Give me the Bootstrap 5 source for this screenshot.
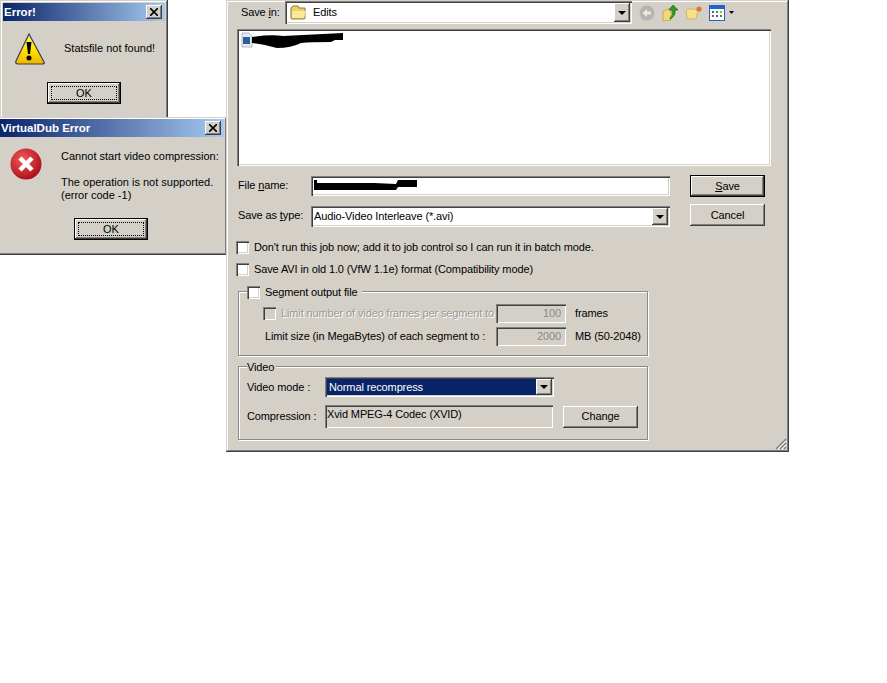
<!DOCTYPE html>
<html lang="en">
<head>
    <meta charset="UTF-8">
    <meta name="viewport" content="width=device-width, initial-scale=1.0">
    <title>VirtualDub Error</title>
    <link href="https://cdn.jsdelivr.net/npm/bootstrap@5.3.0/dist/css/bootstrap.min.css" rel="stylesheet">
    <style>
        body { background: #fff; overflow: hidden; font: 11px/13px "Liberation Sans", sans-serif; color: #000; }
        span, p, label { white-space: nowrap; }
        u { text-underline-offset: 1px; }
        /* windows sit on a free desktop, these are the only absolute boxes */
        .win { position: absolute; background: #d4d0c8; box-shadow: inset -1px -1px 0 #404040, inset 1px 1px 0 #d4d0c8, inset -2px -2px 0 #808080, inset 2px 2px 0 #fff; }
        .win-one { left: 0; top: 0; width: 168px; height: 122px; padding: 3px; }
        .win-two { left: -3px; top: 117px; width: 230px; height: 138px; padding: 2px 3px; }
        .win-save { left: 226px; top: 0; width: 563px; height: 452px; letter-spacing: -.12px; }
        .title-bar { height: 18px; padding: 0 3px 0 1px; background: linear-gradient(90deg, #0a246a, #a6caf0); color: #fff; font: bold 11.5px/18px "Liberation Sans", sans-serif; }
        .close-btn { width: 16px; height: 14px; background: #d4d0c8; box-shadow: inset -1px -1px 0 #404040, inset 1px 1px 0 #fff, inset -2px -2px 0 #808080; }
        .close-btn svg { display: block; margin: 3px 0 0 4px; }
        .msg-one { height: 43px; padding-left: 12px; margin-top: 6px; }
        .msg-one p { margin: 0 0 0 19px; }
        .msg-two { height: 81px; padding: 11px 0 0 10px; }
        .msg-two p { margin: 2px 0 0 19px; line-height: 13px; }
        .ok-btn { width: 74px; height: 22px; background: #d4d0c8; border: 1px solid #000; box-shadow: inset -1px -1px 0 #404040, inset 1px 1px 0 #fff, inset -2px -2px 0 #808080; position: relative; }
        .ok-btn::after { content: ""; position: absolute; inset: 3px; border: 1px dotted #000; }
        .ok-one { margin: 12px 0 0 44px; }
        .ok-two { margin: 0 0 0 74px; }
        .top-row { height: 23px; margin-top: 1px; padding-left: 15px; }
        .top-row label { width: 44px; }
        .sunken { background: #fff; box-shadow: inset 1px 1px 0 #808080, inset 2px 2px 0 #404040, inset -1px -1px 0 #fff, inset -2px -2px 0 #d4d0c8; }
        .combo-top { width: 347px; height: 23px; padding-left: 5px; gap: 5px; }
        .arrow-btn { width: 16px; background: #d4d0c8; box-shadow: inset -1px -1px 0 #404040, inset 1px 1px 0 #fff, inset -2px -2px 0 #808080; }
        .arrow-btn::after { content: ""; border: 4px solid transparent; border-top-color: #000; border-bottom-width: 0; }
        .combo-top .arrow-btn { height: 19px; margin: 0 2px 0 auto; }
        .tool-icons { margin-left: 7px; gap: 6px; }
        .file-list { margin: 5px 0 0 11px; width: 534px; height: 137px; padding: 3px 4px; }
        .name-row { margin: 9px 0 0 12px; height: 22px; }
        .type-row { margin: 7px 0 0 12px; height: 23px; }
        .name-row label, .type-row label { width: 73px; }
        .name-row label { margin-top: 4px; }
        .type-row label { margin-top: 5px; }
        .name-field { width: 359px; height: 20px; margin-top: 1px; padding: 3px; }
        .type-field { width: 359px; height: 21px; margin-top: 2px; padding: 0 2px 0 3px; }
        .type-field .arrow-btn { height: 17px; margin-left: auto; }
        .push-btn { width: 75px; height: 22px; margin-left: 20px; background: #d4d0c8; box-shadow: inset -1px -1px 0 #404040, inset 1px 1px 0 #fff, inset -2px -2px 0 #808080; }
        .push-default { border: 1px solid #000; }
        .check-row { margin-left: 10px; height: 13px; gap: 5px; }
        .check-one { margin-top: 14px; }
        .check-two { margin-top: 9px; }
        .tick { width: 13px; height: 13px; flex: none; box-shadow: inset 1px 1px 0 #808080, inset 2px 2px 0 #404040, inset -1px -1px 0 #fff, inset -2px -2px 0 #d4d0c8; background: #fff; }
        .tick-off { background: #d4d0c8; }
        .group-box { position: relative; margin: 0 0 0 12px; width: 410px; border: 1px solid #8c8a84; box-shadow: 1px 1px 0 #fff, inset 1px 1px 0 #fff; }
        .group-seg { margin-top: 15px; height: 65px; padding: 12px 0 0 24px; }
        .group-vid { margin-top: 10px; height: 74px; padding: 10px 0 0 8px; }
        .legend-box { position: absolute; left: 8px; top: -6px; background: #d4d0c8; padding-right: 4px; gap: 5px; height: 13px; }
        .legend-text { position: absolute; left: 8px; top: -6px; background: #d4d0c8; padding-right: 2px; }
        .seg-row { height: 19px; }
        .seg-row + .seg-row { margin-top: 4px; }
        .seg-label { width: 233px; padding-left: 2px; }
        .seg-label.dim { color: #9a9a94; text-shadow: 1px 1px 0 #fff; margin-left: 5px; padding-left: 0; width: 215px; }
        .seg-num { width: 70px; height: 19px; margin-right: 9px; padding-right: 5px; text-align: right; color: #8a8a84; line-height: 19px; background: #d4d0c8; box-shadow: inset 1px 1px 0 #808080, inset 2px 2px 0 #404040, inset -1px -1px 0 #fff; }
        .vid-label { width: 78px; }
        .vid-combo { width: 229px; height: 20px; padding: 2px; }
        .vid-pick { flex: 1; background: #0a246a; color: #fff; padding-left: 2px; line-height: 16px; }
        .vid-row-two { margin-top: 8px; }
        .comp-field { width: 228px; height: 23px; padding: 3px 2px; background: #d4d0c8; box-shadow: inset 1px 1px 0 #808080, inset 2px 2px 0 #404040, inset -1px -1px 0 #fff; }
        .change-btn { margin-left: 10px; }
        .grip { position: absolute; right: 2px; bottom: 2px; }
    </style>
</head>
<body>

    <!-- first message box -->
    <div class="win win-one">
        <div class="title-bar d-flex align-items-center justify-content-between">
            <span>Error!</span>
            <div class="close-btn"><svg width="8" height="8" viewBox="0 0 8 8"><path d="M0 0L8 8M8 0L0 8" stroke="#000" stroke-width="1.6"/></svg></div>
        </div>
        <div class="msg-one d-flex align-items-center">
            <svg width="30" height="32" viewBox="0 0 30 32" class="flex-shrink-0"><defs><linearGradient id="yellowTri" x1="0" y1="0" x2="0" y2="1"><stop offset="0" stop-color="#fff27a"/><stop offset=".5" stop-color="#ffe600"/><stop offset="1" stop-color="#f0b400"/></linearGradient></defs><path d="M14 1L29 29Q30 31 27 31H3Q0 31 1 28Z" fill="url(#yellowTri)" stroke="#3a3a50" stroke-width="1.2"/><path d="M11.500 9h5l-1.500 12h-2z" fill="#000"/><circle cx="14" cy="25" r="2.500" fill="#000"/></svg>
            <p>Statsfile not found!</p>
        </div>
        <div class="ok-btn ok-one d-flex align-items-center justify-content-center">OK</div>
    </div>

    <!-- VirtualDub message box -->
    <div class="win win-two">
        <div class="title-bar d-flex align-items-center justify-content-between">
            <span>VirtualDub Error</span>
            <div class="close-btn"><svg width="8" height="8" viewBox="0 0 8 8"><path d="M0 0L8 8M8 0L0 8" stroke="#000" stroke-width="1.6"/></svg></div>
        </div>
        <div class="msg-two d-flex">
            <svg width="32" height="32" viewBox="0 0 32 32" class="flex-shrink-0"><defs><radialGradient id="redBall" cx=".4" cy=".35" r=".7"><stop offset="0" stop-color="#f25a5a"/><stop offset="1" stop-color="#a80d14"/></radialGradient></defs><circle cx="16" cy="16" r="15.500" fill="url(#redBall)"/><path d="M10 10L22 22M22 10L10 22" stroke="#fff" stroke-width="4.500"/></svg>
            <p>Cannot start video compression:<br><br>The operation is not supported.<br>(error code -1)</p>
        </div>
        <div class="ok-btn ok-two d-flex align-items-center justify-content-center">OK</div>
    </div>

    <!-- save dialog -->
    <div class="win win-save">
        <div class="top-row d-flex align-items-center">
            <label>Save <u>i</u>n:</label>
            <div class="sunken combo-top d-flex align-items-center">
                <svg width="18" height="15" viewBox="0 0 18 15"><path d="M1 3L3 1H8L9 3H15V13Q15 14 14 14H2Q1 14 1 13Z" fill="#f0d060" stroke="#8a7a3a"/><path d="M2 6H16L14 13H2Z" fill="#fbe89a"/></svg>
                <span>Edits</span>
                <div class="arrow-btn d-flex align-items-center justify-content-center"></div>
            </div>
            <div class="tool-icons d-flex align-items-center">
                <svg width="16" height="16" viewBox="0 0 16 16"><circle cx="8" cy="8" r="7.500" fill="#b4b4b0"/><path d="M3.500 8L8 4V6.500H12V9.500H8V12Z" fill="#e8e8e4"/></svg>
                <svg width="18" height="18" viewBox="0 0 18 18"><path d="M2 7L10 4V16L2 17Z" fill="#f3d873" stroke="#b09a4a" stroke-width=".7"/><path d="M9 14Q13 11 11 6H8L12 1L17 6H14Q15 12 9 15Z" fill="#2e9e1e" stroke="#0d5a0a" stroke-width=".6"/></svg>
                <svg width="18" height="16" viewBox="0 0 18 16"><path d="M1 5L3 4H8L13 5L11 14H2Z" fill="#f6e08c" stroke="#c0a850" stroke-width=".7"/><circle cx="14" cy="4" r="2.600" fill="#e8742a"/></svg>
                <div class="d-flex align-items-center">
                    <svg width="16" height="16" viewBox="0 0 16 16"><rect x=".5" y=".5" width="15" height="15" fill="#fff" stroke="#1f64c8"/><rect x="1" y="1" width="14" height="3" fill="#1f64c8"/><path d="M3 6h2v2H3z" fill="#2a62c0"/><path d="M7 6h2v2H7z" fill="#3a9a3a"/><path d="M11 6h2v2h-2z" fill="#d0a020"/><path d="M3 10h2v2H3z" fill="#d04a30"/><path d="M7 10h2v2H7z" fill="#2a62c0"/><path d="M11 10h2v2h-2z" fill="#3a9a3a"/></svg>
                    <svg width="6" height="4" viewBox="0 0 6 4" class="ms-1"><path d="M0 0H5L2.500 3Z" fill="#000"/></svg>
                </div>
            </div>
        </div>

        <div class="sunken file-list">
            <svg width="104" height="18" viewBox="0 0 104 18" class="d-block"><path d="M1 1H8L11 4V15H1Z" fill="#e8eaf2" stroke="#9aa0b0" stroke-width=".7"/><rect x="2" y="5" width="7" height="7" fill="#2f5f9a"/><path d="M11 5Q30 2 42 4L102 1V8H94L90 10Q70 10 60 11Q50 16 36 16Q22 12 11 11Z" fill="#000"/></svg>
        </div>

        <div class="name-row d-flex align-items-start">
            <label>File <u>n</u>ame:</label>
            <div class="sunken name-field">
                <svg width="104" height="12" viewBox="0 0 104 12" class="d-block"><path d="M0 1H3V4H60L82 5L84 1H103V8H84L82 11H0Z" fill="#000"/></svg>
            </div>
            <div class="push-btn push-default d-flex align-items-center justify-content-center"><span><u>S</u>ave</span></div>
        </div>

        <div class="type-row d-flex align-items-start">
            <label>Save as <u>t</u>ype:</label>
            <div class="sunken type-field d-flex align-items-center">
                <span>Audio-Video Interleave (*.avi)</span>
                <div class="arrow-btn d-flex align-items-center justify-content-center"></div>
            </div>
            <div class="push-btn d-flex align-items-center justify-content-center">Cancel</div>
        </div>

        <div class="check-row check-one d-flex align-items-center">
            <div class="tick"></div>
            <span>Don't run this job now; add it to job control so I can run it in batch mode.</span>
        </div>
        <div class="check-row check-two d-flex align-items-center">
            <div class="tick"></div>
            <span>Save AVI in old 1.0 (VfW 1.1e) format (Compatibility mode)</span>
        </div>

        <div class="group-box group-seg">
            <div class="legend-box d-flex align-items-center">
                <div class="tick"></div>
                <span>Segment output file</span>
            </div>
            <div class="seg-row d-flex align-items-center">
                <div class="tick tick-off"></div>
                <span class="seg-label dim">Limit number of video frames per segment to</span>
                <div class="seg-num">100</div>
                <span>frames</span>
            </div>
            <div class="seg-row d-flex align-items-center">
                <span class="seg-label">Limit size (in MegaBytes) of each segment to :</span>
                <div class="seg-num">2000</div>
                <span>MB (50-2048)</span>
            </div>
        </div>

        <div class="group-box group-vid">
            <div class="legend-text">Video</div>
            <div class="d-flex align-items-center">
                <span class="vid-label">Video mode :</span>
                <div class="sunken vid-combo d-flex">
                    <div class="vid-pick">Normal recompress</div>
                    <div class="arrow-btn d-flex align-items-center justify-content-center"></div>
                </div>
            </div>
            <div class="vid-row-two d-flex align-items-center">
                <span class="vid-label">Compression :</span>
                <div class="comp-field">Xvid MPEG-4 Codec (XVID)</div>
                <div class="push-btn change-btn d-flex align-items-center justify-content-center">Change</div>
            </div>
        </div>

        <svg class="grip" width="12" height="12" viewBox="0 0 12 12"><path d="M11 1L1 11M11 5L5 11M11 9L9 11" stroke="#808080" stroke-width="1.4"/><path d="M11 3L3 11M11 7L7 11" stroke="#fff"/></svg>
    </div>

    <script src="https://cdn.jsdelivr.net/npm/bootstrap@5.3.0/dist/js/bootstrap.bundle.min.js"></script>
</body>
</html>
